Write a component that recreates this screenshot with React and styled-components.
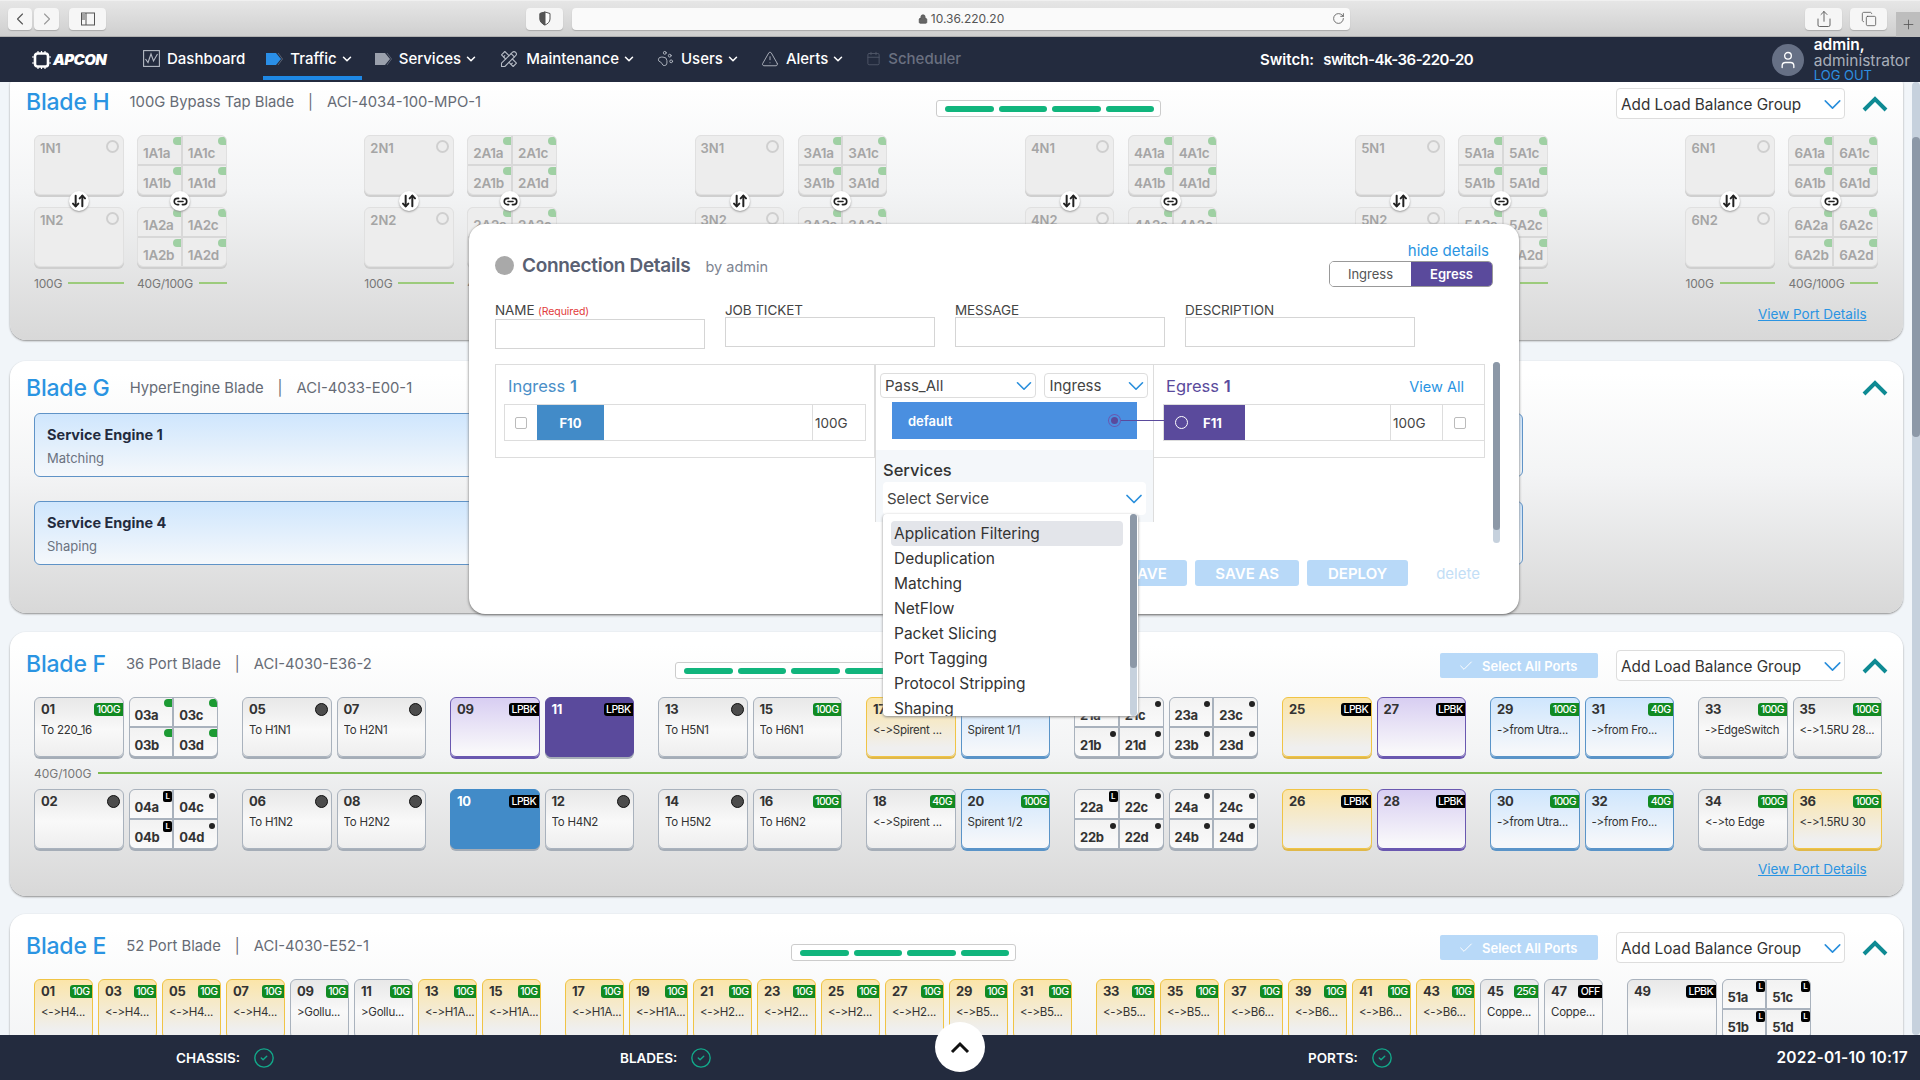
import React from 'react';
import styled, { createGlobalStyle, css } from 'styled-components';
import {
  ChevronLeft, ChevronRight, ChevronDown, Lock, RotateCw, Share, Copy, Plus, PawPrint,
  TriangleAlert, Calendar, CircleCheck, ArrowDownUp, Link2, Check, User,
} from 'lucide-react';
import { TbTools } from 'react-icons/tb';

const GlobalStyle = createGlobalStyle`
  html, body { margin: 0; height: 100%; overflow: hidden; background: #f1f5f9; }
  body { font-family: Inter, "Liberation Sans", sans-serif; color: #333; }
  * { box-sizing: border-box; }
`;

const Page = styled.div`
  position: relative;
  display: flex;
  flex-direction: column;
  height: 1080px;
  overflow: hidden;
`;

/* ---- browser bar ---- */
const Chrome = styled.div`
  display: flex;
  align-items: center;
  height: 37px;
  padding-left: 8px;
  background: linear-gradient(#e6e6e6, #cfcfcf);
  border-top: 1px solid #f0f0f0;
  border-bottom: 1px solid #b0b0b0;
`;
const ChromeBtn = styled.div`
  display: flex;
  align-items: center;
  justify-content: center;
  width: ${p => p.$w || 37}px;
  height: 22px;
  margin-left: ${p => p.$ml || 0}px;
  background: #f6f6f6;
  border-radius: 4px;
  box-shadow: 0 1px 1px #aaa;
  color: #555;
`;
const Address = styled.div`
  position: relative;
  display: flex;
  align-items: center;
  justify-content: center;
  gap: 3px;
  width: 778px;
  height: 22px;
  margin-left: 9px;
  background: #fafafa;
  border-radius: 4px;
  box-shadow: 0 1px 1px #aaa;
  font-size: 12px;
  color: #555;
  svg.reload { position: absolute; right: 5px; }
`;
const NewTab = styled.div`
  display: flex;
  align-items: center;
  justify-content: center;
  width: 24px;
  height: 25px;
  margin: 12px 0 0 9px;
  background: #bdbdbd;
  color: #555;
`;
const Spacer = styled.div`flex: 1;`;

/* ---- top nav ---- */
const Nav = styled.nav`
  position: relative;
  z-index: 6;
  display: grid;
  grid-template-columns: 111px 1117px 1fr auto;
  align-items: center;
  height: 45px;
  padding: 0 10px 0 32px;
  background: #232b3e;
  color: #fff;
`;
const Logo = styled.div`
  display: flex;
  align-items: center;
  gap: 2px;
  font-size: 15px;
  font-weight: 900;
  font-style: italic;
  letter-spacing: -0.6px;
`;
const NavItems = styled.div`
  display: flex;
  height: 45px;
  margin-left: -11px;
`;
const NavItem = styled.div`
  position: relative;
  display: flex;
  align-items: center;
  gap: 7px;
  padding: 0 10px 2px 11px;
  font-size: 15px;
  font-weight: 500;
  color: ${p => (p.$off ? '#6a7080' : '#fff')};
  svg { color: ${p => (p.$off ? '#4f5667' : '#b5bac4')}; flex: none; }
  ${p => p.$active && css`
    &::after {
      content: '';
      position: absolute;
      left: 8px;
      right: 2px;
      bottom: 2px;
      height: 4px;
      background: #1e88e5;
    }
  `}
`;
const NavChevron = styled(ChevronDown)`
  margin-left: -4px;
  && { color: #fff; }
`;
const SwitchName = styled.div`
  font-size: 15px;
  font-weight: 600;
  white-space: nowrap;
  span { margin-left: 9px; letter-spacing: -0.5px; }
`;
const UserBox = styled.div`
  display: flex;
  align-items: center;
  gap: 10px;
`;
const Avatar = styled.div`
  display: flex;
  align-items: center;
  justify-content: center;
  width: 32px;
  height: 32px;
  border-radius: 50%;
  background: #667085;
`;
const UserText = styled.div`
  display: flex;
  flex-direction: column;
  font-size: 15.5px;
  line-height: 16px;
  b { font-weight: 600; }
  span { color: #a9afba; }
  a { color: #2d8fe0; font-size: 13px; line-height: 13px; }
`;

/* ---- blades ---- */
const Body = styled.div`
  flex: 1;
  min-height: 0;
  display: flex;
  overflow: hidden;
`;
const Scroller = styled.div`
  flex: 1;
  min-width: 0;
  margin-top: -12px;
`;
const Track = styled.div`
  width: 8px;
  padding-top: 55px;
  background: #c6d1dd;
  border-radius: 4px;
`;
const Thumb = styled.div`
  height: 300px;
  border-radius: 4px;
  background: #8c98a7;
`;
const Card = styled.section`
  height: ${p => p.$h}px;
  margin: 0 9px ${p => p.$mb}px 10px;
  padding: ${p => p.$pt || 18}px 0 0 24px;
  border-radius: 16px;
  background: linear-gradient(#fff 5%, #f3f4f5 45%, #d8d8d8);
  box-shadow: 0 1px 2px #8f8f8f;
`;
const Header = styled.header`
  display: flex;
  align-items: flex-start;
  height: 31px;
  margin-left: -8px;
  padding-right: 15px;
`;
const TitleBlock = styled.div`
  display: flex;
  width: ${p => p.$w}px;
  flex: none;
  align-items: center;
  height: 28px;
  white-space: nowrap;
`;
const BladeName = styled.h2`
  margin: 0 20px 0 0;
  font-size: 23px;
  font-weight: 500;
  letter-spacing: -0.2px;
  color: #2a94e2;
`;
const BladeInfo = styled.span`
  font-size: 14.8px;
  color: #666b75;
  i { font-style: normal; margin: 0 14px; }
`;
const Meter = styled.div`
  display: flex;
  gap: 5px;
  align-items: center;
  width: 225px;
  height: 17px;
  margin-top: 12px;
  padding: 0 6px 0 8px;
  background: #fff;
  border: 1px solid #ccc;
  border-radius: 3px;
  span { width: 49px; height: 6px; border-radius: 3px; background: #11b57d; }
`;
const HeadRight = styled.div`
  display: flex;
  align-items: flex-start;
  margin-left: auto;
`;
const SelectAll = styled.div`
  display: flex;
  align-items: center;
  gap: 8px;
  width: 158px;
  height: 25px;
  margin: 3px 18px 0 0;
  padding-left: 18px;
  background: #b8d9f8;
  border-radius: 2px;
  color: #fff;
  font-size: 13px;
  font-weight: 600;
  white-space: nowrap;
`;
const LoadSelect = styled.div`
  display: flex;
  align-items: center;
  justify-content: space-between;
  width: 229px;
  height: 31px;
  padding: 1px 0 0 4px;
  background: #fff;
  border: 1px solid #ddd;
  border-radius: 4px;
  font-size: 15.3px;
  color: #333;
  white-space: nowrap;
  overflow: hidden;
  svg { color: #2a8fdc; flex: none; margin-right: -3px; }
`;
const Caret = styled.svg`
  width: 26px;
  height: 16px;
  margin: ${p => (p.$tight ? 6 : 8)}px 0 0 17px;
  flex: none;
  fill: none;
  stroke: #0e8a93;
  stroke-width: 4;
`;

/* ---- ports ---- */
const tones = {
  plain: css`background: linear-gradient(#e8e8e8, #f9f9f9 55%, #eeeeee); border-color: #a9b2bd; box-shadow: 0 2px 0 #a5adb7;`,
  yellow: css`background: linear-gradient(#fbe5a9, #efefef 85%); border-color: #f0c445; box-shadow: 0 2px 0 #e0b84a;`,
  blue: css`background: linear-gradient(#cfe6fd, #f5f7fa 90%); border-color: #5a94c8; box-shadow: 0 2px 0 #5a94c8;`,
  purple: css`background: linear-gradient(#d8cef2, #f8f7fa 90%); border-color: #6a58b0; box-shadow: 0 2px 0 #6a58b0;`,
  violet: css`background: #5a4a9c; border-color: #5a4a9c; color: #fff; box-shadow: 0 2px 0 #a5adb7;`,
  azure: css`background: #428bc8; border-color: #428bc8; color: #fff; box-shadow: 0 2px 0 #a5adb7;`,
  faded: css`background: #ededed; border-color: #e0e0e0; color: #a5a5a5; box-shadow: 0 2px 0 #cfcfcf;`,
};
const PortBox = styled.div`
  position: relative;
  width: ${p => p.$w || 89.5}px;
  height: 60px;
  padding: 4px 0 0 ${p => (p.$tone === 'faded' ? 5 : 6)}px;
  flex: none;
  border: 1px solid;
  border-radius: 6px;
  overflow: hidden;
  color: #333;
  ${p => tones[p.$tone || 'plain']}
`;
const PortHead = styled.div`
  display: flex;
  align-items: center;
  justify-content: space-between;
  height: 14px;
  font-size: 13px;
  font-weight: 700;
  letter-spacing: -0.3px;
`;
const Tag = styled.span`
  display: flex;
  align-items: center;
  height: 13px;
  padding: 0 2.5px;
  border-radius: 3px 0 0 3px;
  background: ${p => (p.$black ? '#000' : '#118a22')};
  color: #fff;
  font-size: 10.5px;
  font-weight: 500;
  letter-spacing: -0.6px;
`;
const Dot = styled.span`
  width: 13px;
  height: 13px;
  margin-right: 3px;
  border-radius: 50%;
  background: #4c4c4c;
  border: 1px solid #111;
`;
const Ring = styled.span`
  width: 13px;
  height: 13px;
  margin-right: 4px;
  border-radius: 50%;
  border: 2px solid #cfcfcf;
`;
const PortLabel = styled.div`
  margin-top: 6px;
  font-size: 11.5px;
  line-height: 16px;
  letter-spacing: -0.25px;
  white-space: nowrap;
  overflow: hidden;
`;
const SplitBox = styled.div`
  display: grid;
  grid-template-columns: 1fr 1fr;
  grid-template-rows: 1fr 1fr;
  gap: 2px;
  width: 89.5px;
  height: 60px;
  flex: none;
  overflow: hidden;
  border-radius: 6px;
  background: ${p => (p.$faded ? '#d8d8d8' : '#a9b2bd')};
  border: 1px solid ${p => (p.$faded ? '#e0e0e0' : '#a9b2bd')};
  box-shadow: 0 2px 0 ${p => (p.$faded ? '#cfcfcf' : '#a5adb7')};
`;
const SplitCell = styled.div`
  position: relative;
  display: flex;
  align-items: flex-end;
  padding: 0 0 3px 5px;
  background: ${p => (p.$faded ? '#ededed' : 'linear-gradient(#f2f2f2, #fafafa)')};
  color: ${p => (p.$faded ? '#a5a5a5' : '#333')};
  font-size: ${p => (p.$faded ? 13.5 : 13)}px;
  font-weight: ${p => (p.$faded ? 600 : 700)};
  letter-spacing: -0.3px;
  line-height: 16px;
`;
const markerKinds = {
  green: css`top: 1px; right: 0; width: 8px; height: 8px; border-radius: 4px 0 0 4px; background: #1c9a33;`,
  pale: css`top: 1px; right: 0; width: 8px; height: 8px; border-radius: 4px 0 0 4px; background: #9fd0a3;`,
  dot: css`top: 3px; right: 2px; width: 6px; height: 6px; border-radius: 50%; background: #222;`,
  lpbk: css`
    top: 1px; right: 0; width: 9px; height: 11px; border-radius: 2px; background: #000; color: #fff;
    font-size: 8px; line-height: 11px; text-align: center; font-weight: 600; letter-spacing: 0;
  `,
};
const Marker = styled.span`
  position: absolute;
  ${p => markerKinds[p.$kind]}
`;

function Port({ no, label, tag, tone, dot, w }) {
  const black = tag === 'LPBK' || tag === 'OFF';
  return (
    <PortBox $tone={tone} $w={w}>
      <PortHead>
        {no}
        {tag && <Tag $black={black}>{tag}</Tag>}
        {dot && <Dot />}
      </PortHead>
      {label && <PortLabel>{label}</PortLabel>}
    </PortBox>
  );
}

function Split({ no, kinds }) {
  const names = ['a', 'c', 'b', 'd'];
  return (
    <SplitBox>
      {names.map((n, i) => (
        <SplitCell key={n}>
          {no + n}
          <Marker $kind={kinds[i]}>{kinds[i] === 'lpbk' ? 'L' : ''}</Marker>
        </SplitCell>
      ))}
    </SplitBox>
  );
}

const PortArea = styled.div`
  margin-top: 16px;
`;
const PairGrid = styled.div`
  display: grid;
  grid-template-columns: repeat(9, 184px);
  column-gap: 24px;
`;
const Pair = styled.div`
  display: flex;
  gap: 5px;
`;
const SpeedLine = styled.div`
  display: flex;
  align-items: center;
  gap: 6px;
  width: 1848px;
  height: 32px;
  font-size: 12px;
  color: #777;
  &::after { content: ''; flex: 1; height: 2px; background: #7cbb4f; }
`;
const ViewLink = styled.a`
  display: block;
  width: 108px;
  margin: ${p => p.$mt}px 37px 0 auto;
  font-size: 13.5px;
  line-height: 18px;
  color: #2a94e2;
  text-decoration: underline;
  white-space: nowrap;
`;

/* blade H */
const BypassRow = styled.div`
  display: flex;
  justify-content: space-between;
  width: 1844px;
  margin-top: 16px;
`;
const Bypass = styled.div`
  position: relative;
  display: grid;
  grid-template-columns: 89.5px 89.5px;
  column-gap: 13.5px;
  row-gap: 12px;
`;
const FadedName = styled.div`
  display: flex;
  justify-content: space-between;
  font-size: 13px;
  font-weight: 600;
`;
const FadedCell = styled(SplitCell).attrs({ $faded: true })``;
const RoundLink = styled.div`
  position: absolute;
  top: 56px;
  left: ${p => p.$left}px;
  display: flex;
  align-items: center;
  justify-content: center;
  width: 20px;
  height: 20px;
  border-radius: 50%;
  background: #fff;
  box-shadow: 0 1px 2px #999;
  color: #222;
`;
const SpeedCell = styled.div`
  display: flex;
  align-items: center;
  gap: 6px;
  height: 16px;
  margin-top: -4px;
  font-size: 12px;
  letter-spacing: -0.2px;
  color: #777;
  &::after { content: ''; flex: 1; height: 2px; background: #9ccb7c; }
`;

/* blade G */
const EngineGrid = styled.div`
  display: grid;
  grid-template-columns: 736px 736px;
  column-gap: 17px;
  row-gap: 24px;
  margin-top: 8px;
`;
const Engine = styled.div`
  height: 64px;
  padding: 12px 12px 0;
  background: linear-gradient(#cfe6fd, #f5f8fb);
  border: 1px solid #5f93c7;
  border-radius: 6px;
  h4 { margin: 0; font-size: 14.5px; line-height: 18px; font-weight: 700; color: #232b3e; }
  p { margin: 6px 0 0; font-size: 13px; line-height: 16px; color: #6b7280; }
`;

/* blade E */
const WideRow = styled.div`
  display: flex;
  gap: 24px;
  margin-top: 16px;
`;

/* ---- modal ---- */
const Modal = styled.div`
  position: absolute;
  z-index: 5;
  top: 224px;
  left: 469px;
  width: 1050px;
  height: 390px;
  padding-left: 26px;
  background: #fff;
  border-radius: 16px;
  box-shadow: 0 1px 3px #666;
`;
const ModalHead = styled.div`
  display: flex;
  justify-content: space-between;
  align-items: flex-start;
  padding-right: 26px;
`;
const ModalTitle = styled.div`
  display: flex;
  align-items: center;
  height: 26px;
  margin-top: 28px;
  h3 { margin: 0 15px 0 8px; font-size: 19px; font-weight: 600; letter-spacing: -0.3px; color: #596072; }
  span { font-size: 14.5px; color: #7d8491; padding-top: 3px; }
`;
const StatusDot = styled.span`
  width: 19px;
  height: 19px;
  border-radius: 50%;
  background: #a9a9a9;
`;
const HeadSide = styled.div`
  display: flex;
  flex-direction: column;
  align-items: flex-end;
  padding-top: 17px;
  a { margin-right: 4px; font-size: 15px; line-height: 20px; color: #2a94e2; }
`;
const Toggle = styled.div`
  display: flex;
  width: 164px;
  height: 26px;
  border: 1px solid #999;
  border-radius: 5px;
  overflow: hidden;
  font-size: 13px;
`;
const ToggleOption = styled.div`
  flex: 1;
  display: flex;
  align-items: center;
  justify-content: center;
  background: ${p => (p.$on ? '#5a4a9c' : '#fff')};
  color: ${p => (p.$on ? '#fff' : '#555')};
  font-weight: ${p => (p.$on ? 600 : 400)};
`;
const Fields = styled.div`
  display: grid;
  grid-template-columns: 210px 210px 210px 230px;
  column-gap: 20px;
  margin-top: 16px;
`;
const Field = styled.label`
  display: block;
  font-size: 13.5px;
  line-height: 14px;
  color: #444;
  letter-spacing: -0.1px;
  em { font-style: normal; font-size: 10.5px; color: #e23b3b; }
  div { height: 30px; border: 1px solid #d5d5d5; }
`;
const Connection = styled.div`
  display: flex;
  align-items: flex-start;
  margin-top: 15px;
`;
const SidePanel = styled.div`
  flex: none;
  width: ${p => p.$w}px;
  height: 94px;
  padding-top: 10px;
  border: 1px solid #ddd;
  ${p => p.$right && css`border-left: 0;`}
`;
const PanelTitle = styled.div`
  display: flex;
  justify-content: space-between;
  align-items: center;
  height: 22px;
  padding: 0 20px 0 ${p => p.$pl}px;
  font-size: 16.5px;
  color: ${p => p.$color};
  b { font-weight: 600; }
  a { font-size: 14.5px; color: #2a94e2; }
`;
const PortStrip = styled.div`
  display: flex;
  align-items: stretch;
  height: 37px;
  margin: 7px ${p => p.$mr}px 0 ${p => p.$ml}px;
  border: 1px solid #ddd;
  ${p => p.$open && css`border-right: 0;`}
`;
const Box = styled.span`
  width: 12px;
  height: 12px;
  border: 1px solid #bbb;
  border-radius: 2px;
`;
const BoxCell = styled.div`
  display: flex;
  align-items: center;
  justify-content: center;
  width: ${p => p.$w}px;
  padding-right: ${p => p.$pr || 0}px;
  ${p => p.$line && css`border-left: 1px solid #ddd;`}
`;
const PortFace = styled.div`
  display: flex;
  align-items: center;
  justify-content: ${p => (p.$ring ? 'flex-start' : 'center')};
  gap: 15px;
  width: ${p => p.$w}px;
  padding-left: ${p => (p.$ring ? 11 : 0)}px;
  background: ${p => p.$bg};
  color: #fff;
  font-size: 13px;
  font-weight: 700;
  i { width: 13px; height: 13px; border: 1.5px solid #fff; border-radius: 50%; }
`;
const SpeedCellBox = styled.div`
  display: flex;
  align-items: center;
  width: ${p => p.$w}px;
  margin-left: auto;
  padding-left: 2px;
  border-left: 1px solid #ddd;
  font-size: 13.5px;
  color: #444;
`;
const Mid = styled.div`
  position: relative;
  flex: none;
  width: 279px;
  height: 158px;
  border: 1px solid #ddd;
  border-bottom: 0;
`;
const MidSelects = styled.div`
  display: flex;
  gap: 8px;
  padding: 8px 5px 0 4px;
`;
const MiniSelect = styled.div`
  display: flex;
  align-items: center;
  justify-content: space-between;
  width: ${p => p.$w}px;
  height: 25px;
  padding: 0 1px 0 4px;
  border: 1px solid #ddd;
  border-radius: 4px;
  font-size: 15px;
  color: #444;
  overflow: hidden;
  svg { color: #2a8fdc; flex: none; margin-right: -3px; }
`;
const FilterBar = styled.div`
  position: relative;
  display: flex;
  align-items: center;
  height: 37px;
  margin: 4px 0 0 16px;
  width: 245px;
  padding: 0 0 0 16px;
  background: #4a8fe0;
  color: #fff;
  font-size: 13px;
  font-weight: 600;
`;
const FilterPin = styled.span`
  position: absolute;
  top: 15px;
  left: 219px;
  width: 7px;
  height: 7px;
  border-radius: 50%;
  background: #5a4a9c;
  box-shadow: 0 0 0 2px #4a8fe0, 0 0 0 3px #6a58b0;
`;
const Wire = styled.span`
  position: absolute;
  z-index: 1;
  top: 18px;
  left: 229px;
  width: 43px;
  height: 1px;
  background: #5a4a9c;
`;
const ServiceBlock = styled.div`
  height: 72px;
  margin-top: 11px;
  padding: 9px 7px 0;
  background: #f4f7fa;
  h5 { margin: 0 0 1px; font-size: 16.5px; line-height: 22px; font-weight: 500; color: #333; }
`;
const ServiceSelect = styled.div`
  display: flex;
  align-items: center;
  justify-content: space-between;
  height: 33px;
  padding: 0 1px 0 4px;
  background: #fff;
  border-radius: 4px;
  font-size: 15px;
  color: #444;
  overflow: hidden;
  svg { color: #2a8fdc; flex: none; margin-right: -3px; }
`;
const Menu = styled.div`
  position: absolute;
  z-index: 2;
  top: 149px;
  left: 7px;
  width: 255px;
  height: 202px;
  padding: 7px 0 0 8px;
  background: #fff;
  border-radius: 4px;
  overflow: hidden;
  box-shadow: 0 1px 3px #888;
`;
const MenuItem = styled.div`
  width: 232px;
  height: 25px;
  padding-left: 3px;
  border-radius: 4px;
  background: ${p => (p.$on ? '#e3e5ea' : 'transparent')};
  font-size: 15.5px;
  line-height: 25px;
  color: #333;
`;
const Rail = styled.div`
  position: absolute;
  top: ${p => p.$top}px;
  right: ${p => p.$right}px;
  width: 7px;
  height: ${p => p.$h}px;
  border-radius: 4px;
  background: #c6d1dd;
  span { display: block; height: ${p => p.$thumb}px; border-radius: 4px; background: #8c98a7; }
`;
const Actions = styled.div`
  display: flex;
  align-items: center;
  justify-content: flex-end;
  gap: 8px;
  margin-top: 38px;
  padding-right: 39px;
  a { margin-left: 20px; font-size: 15px; color: #c3def6; }
`;
const ActionBtn = styled.div`
  display: flex;
  align-items: center;
  justify-content: center;
  width: ${p => p.$w}px;
  height: 26px;
  background: #b8d9f8;
  border-radius: 3px;
  color: #fff;
  font-size: 15px;
  font-weight: 600;
`;

/* ---- footer ---- */
const Footer = styled.footer`
  position: relative;
  z-index: 6;
  display: grid;
  grid-template-columns: 444px 688px 1fr auto;
  align-items: center;
  height: 45px;
  padding: 0 12px 0 176px;
  background: #232b3e;
  color: #fff;
  font-size: 14px;
  font-weight: 600;
`;
const Health = styled.div`
  display: flex;
  align-items: center;
  gap: 13px;
  font-size: 13.5px;
  svg { color: #12a98a; }
`;
const UpButton = styled.div`
  position: absolute;
  left: 935px;
  top: -13px;
  display: flex;
  align-items: center;
  justify-content: center;
  width: 50px;
  height: 50px;
  border-radius: 50%;
  background: #fff;
  color: #111;
`;
const Clock = styled.div`
  font-size: 15.5px;
  letter-spacing: 0.2px;
`;

const Up = ({ tight }) => (
  <Caret viewBox="0 0 26 16" $tight={tight}><path d="M2 14 13 3l11 11" /></Caret>
);

function BladeHead({ name, info, model, w, meter, selectAll, noSelect, tight }) {
  return (
    <Header>
      <TitleBlock $w={w}>
        <BladeName>{name}</BladeName>
        <BladeInfo>{info}<i>|</i>{model}</BladeInfo>
      </TitleBlock>
      {meter && <Meter><span /><span /><span /><span /></Meter>}
      <HeadRight>
        {selectAll && <SelectAll><Check size={16} strokeWidth={1.5} />Select All Ports</SelectAll>}
        {!noSelect && <LoadSelect>Add Load Balance Group<ChevronDown size={29} strokeWidth={1.3} /></LoadSelect>}
        <Up tight={tight} />
      </HeadRight>
    </Header>
  );
}

function BypassGroup({ n }) {
  const cell = s => ['a', 'c', 'b', 'd'].map(c => (
    <FadedCell key={c}>{`${n}A${s}${c}`}<Marker $kind="pale" /></FadedCell>
  ));
  const node = s => (
    <PortBox $tone="faded">
      <FadedName>{`${n}N${s}`}<Ring /></FadedName>
    </PortBox>
  );
  return (
    <Bypass>
      {node(1)}
      <SplitBox $faded>{cell(1)}</SplitBox>
      {node(2)}
      <SplitBox $faded>{cell(2)}</SplitBox>
      <SpeedCell>100G</SpeedCell>
      <SpeedCell>40G/100G</SpeedCell>
      <RoundLink $left={35}><ArrowDownUp size={16} strokeWidth={3} /></RoundLink>
      <RoundLink $left={136}><Link2 size={15} strokeWidth={2.6} /></RoundLink>
    </Bypass>
  );
}

const G4 = ['green', 'green', 'green', 'green'];
const D4 = ['dot', 'dot', 'dot', 'dot'];

const fTop = [
  [<Port key="a" no="01" tag="100G" label="To 220_16" />, <Split key="b" no="03" kinds={G4} />],
  [<Port key="a" no="05" dot label="To H1N1" />, <Port key="b" no="07" dot label="To H2N1" />],
  [<Port key="a" no="09" tag="LPBK" tone="purple" />, <Port key="b" no="11" tag="LPBK" tone="violet" />],
  [<Port key="a" no="13" dot label="To H5N1" />, <Port key="b" no="15" tag="100G" label="To H6N1" />],
  [<Port key="a" no="17" tag="100G" tone="yellow" label="<->Spirent ..." />, <Port key="b" no="19" tag="100G" tone="blue" label="Spirent 1/1" />],
  [<Split key="a" no="21" kinds={D4} />, <Split key="b" no="23" kinds={D4} />],
  [<Port key="a" no="25" tag="LPBK" tone="yellow" />, <Port key="b" no="27" tag="LPBK" tone="purple" />],
  [<Port key="a" no="29" tag="100G" tone="blue" label="->from Utra..." />, <Port key="b" no="31" tag="40G" tone="blue" label="->from Fro..." />],
  [<Port key="a" no="33" tag="100G" label="->EdgeSwitch" />, <Port key="b" no="35" tag="100G" label="<->1.5RU 28..." />],
];
const fBottom = [
  [<Port key="a" no="02" dot />, <Split key="b" no="04" kinds={['lpbk', 'dot', 'lpbk', 'dot']} />],
  [<Port key="a" no="06" dot label="To H1N2" />, <Port key="b" no="08" dot label="To H2N2" />],
  [<Port key="a" no="10" tag="LPBK" tone="azure" />, <Port key="b" no="12" dot label="To H4N2" />],
  [<Port key="a" no="14" dot label="To H5N2" />, <Port key="b" no="16" tag="100G" label="To H6N2" />],
  [<Port key="a" no="18" tag="40G" label="<->Spirent ..." />, <Port key="b" no="20" tag="100G" tone="blue" label="Spirent 1/2" />],
  [<Split key="a" no="22" kinds={['lpbk', 'dot', 'dot', 'dot']} />, <Split key="b" no="24" kinds={D4} />],
  [<Port key="a" no="26" tag="LPBK" tone="yellow" />, <Port key="b" no="28" tag="LPBK" tone="purple" />],
  [<Port key="a" no="30" tag="100G" tone="blue" label="->from Utra..." />, <Port key="b" no="32" tag="40G" tone="blue" label="->from Fro..." />],
  [<Port key="a" no="34" tag="100G" label="<->to Edge" />, <Port key="b" no="36" tag="100G" tone="yellow" label="<->1.5RU 30" />],
];

const narrow = [
  [['01', '<->H4...'], ['03', '<->H4...'], ['05', '<->H4...'], ['07', '<->H4...'], ['09', '>Gollu...', 'plain'], ['11', '>Gollu...', 'plain'], ['13', '<->H1A...'], ['15', '<->H1A...']],
  [['17', '<->H1A...'], ['19', '<->H1A...'], ['21', '<->H2...'], ['23', '<->H2...'], ['25', '<->H2...'], ['27', '<->H2...'], ['29', '<->B5...'], ['31', '<->B5...']],
  [['33', '<->B5...'], ['35', '<->B5...'], ['37', '<->B6...'], ['39', '<->B6...'], ['41', '<->B6...'], ['43', '<->B6...'], ['45', 'Coppe...', 'plain', '25G'], ['47', 'Coppe...', 'plain', 'OFF']],
];

const services = ['Application Filtering', 'Deduplication', 'Matching', 'NetFlow', 'Packet Slicing', 'Port Tagging', 'Protocol Stripping', 'Shaping'];

const PairRows = ({ rows }) => (
  <PairGrid>
    {rows.map((pair, i) => <Pair key={i}>{pair}</Pair>)}
  </PairGrid>
);

export default function App() {
  return (
    <Page>
      <GlobalStyle />
      <Chrome>
        <ChromeBtn $w={24}><ChevronLeft size={20} strokeWidth={1.3} /></ChromeBtn>
        <ChromeBtn $w={25} $ml={2}><ChevronRight size={20} strokeWidth={1.3} color="#999" /></ChromeBtn>
        <ChromeBtn $ml={10}>
          <svg width="16" height="14" viewBox="0 0 16 14" fill="none" stroke="#555">
            <rect x="1.5" y="1" width="13" height="12" /><path d="M6 1v12" /><path d="M2 3h3M2 5h3M2 7h3" />
          </svg>
        </ChromeBtn>
        <ChromeBtn $ml={420}>
          <svg width="12" height="15" viewBox="0 0 12 15" stroke="#555">
            <path d="M6 1 1 2.5V8c0 3 2.5 5 5 6 2.5-1 5-3 5-6V2.5z" fill="#fff" />
            <path d="M6 1v13c-2.5-1-5-3-5-6V2.5z" fill="#555" />
          </svg>
        </ChromeBtn>
        <Address>
          <Lock size={10} fill="#666" />10.36.220.20
          <RotateCw className="reload" size={13} strokeWidth={1.5} />
        </Address>
        <Spacer />
        <ChromeBtn><Share size={18} strokeWidth={1.2} /></ChromeBtn>
        <ChromeBtn $ml={8}><Copy size={16} strokeWidth={1.2} /></ChromeBtn>
        <NewTab><Plus size={15} strokeWidth={1.3} /></NewTab>
      </Chrome>

      <Nav>
        <Logo>
          <svg width="19" height="18" viewBox="0 0 19 18" fill="none" stroke="#fff">
            <rect x="3" y="2.5" width="13" height="13" rx="2.5" strokeWidth="2.6" />
            <path d="M6 0v2M9.5 0v2M13 0v2M6 16v2M9.5 16v2M13 16v2M0 6h2M0 12h2M17 6h2M17 12h2" strokeWidth="1.2" />
          </svg>
          APCON
        </Logo>
        <NavItems>
          <NavItem>
            <svg width="17" height="17" viewBox="0 0 17 17" fill="none" stroke="currentColor" strokeWidth="1.1">
              <rect x="0.6" y="0.6" width="15.8" height="15.8" /><path d="m2.5 9 2.5 3.5L8 4l2.500 7 4-7" />
            </svg>
            Dashboard
          </NavItem>
          <NavItem $active>
            <svg width="17" height="14" viewBox="0 0 17 14"><path d="M0 1h10l5 6-5 6H0z" fill="#2a8fe8" /><path d="M12 1l4.5 6-4.5 6" stroke="#5a6274" fill="none" /></svg>
            Traffic<NavChevron size={14} strokeWidth={2.6} />
          </NavItem>
          <NavItem>
            <svg width="17" height="14" viewBox="0 0 17 14"><path d="M0 1h10l5 6-5 6H0z" fill="#9aa0ac" /><path d="M12 1l4.5 6-4.5 6" stroke="#5a6274" fill="none" /></svg>
            Services<NavChevron size={14} strokeWidth={2.6} />
          </NavItem>
          <NavItem>
            <TbTools size={20} strokeWidth={1.3} />
            Maintenance<NavChevron size={14} strokeWidth={2.6} />
          </NavItem>
          <NavItem>
            <PawPrint size={17} strokeWidth={1.3} />
            Users<NavChevron size={14} strokeWidth={2.6} />
          </NavItem>
          <NavItem>
            <TriangleAlert size={18} strokeWidth={1.2} />
            Alerts<NavChevron size={14} strokeWidth={2.6} />
          </NavItem>
          <NavItem $off>
            <Calendar size={15} strokeWidth={1.5} />
            Scheduler
          </NavItem>
        </NavItems>
        <SwitchName>Switch:<span>switch-4k-36-220-20</span></SwitchName>
        <UserBox>
          <Avatar><User size={20} strokeWidth={1.6} color="#fff" /></Avatar>
          <UserText>
            <b>admin,</b>
            <span>administrator</span>
            <a>LOG OUT</a>
          </UserText>
        </UserBox>
      </Nav>

      <Body>
        <Scroller>
          <Card $h={270} $mb={21}>
            <BladeHead name="Blade H" info="100G Bypass Tap Blade" model="ACI-4034-100-MPO-1" w={910} meter />
            <BypassRow>
              {[1, 2, 3, 4, 5, 6].map(n => <BypassGroup key={n} n={n} />)}
            </BypassRow>
            <ViewLink $mt={14}>View Port Details</ViewLink>
          </Card>

          <Card $h={252} $mb={19} $pt={13}>
            <BladeHead name="Blade G" info="HyperEngine Blade" model="ACI-4033-E00-1" w={800} noSelect tight />
            <EngineGrid>
              <Engine><h4>Service Engine 1</h4><p>Matching</p></Engine>
              <Engine />
              <Engine><h4>Service Engine 4</h4><p>Shaping</p></Engine>
              <Engine />
            </EngineGrid>
          </Card>

          <Card $h={264} $mb={18}>
            <BladeHead name="Blade F" info="36 Port Blade" model="ACI-4030-E36-2" w={649} meter selectAll />
            <PortArea>
              <PairRows rows={fTop} />
              <SpeedLine>40G/100G</SpeedLine>
              <PairRows rows={fBottom} />
            </PortArea>
            <ViewLink $mt={11}>View Port Details</ViewLink>
          </Card>

          <Card $h={300} $mb={0}>
            <BladeHead name="Blade E" info="52 Port Blade" model="ACI-4030-E52-1" w={765} meter selectAll />
            <WideRow>
              {narrow.map((group, i) => (
                <Pair key={i}>
                  {group.map(([no, label, tone, tag]) => (
                    <Port key={no} no={no} label={label} w={59} tone={tone || 'yellow'} tag={tag || '10G'} />
                  ))}
                </Pair>
              ))}
              <Pair>
                <Port no="49" tag="LPBK" />
                <Split no="51" kinds={['lpbk', 'lpbk', 'lpbk', 'lpbk']} />
              </Pair>
            </WideRow>
          </Card>
        </Scroller>
        <Track><Thumb /></Track>
      </Body>

      <Modal>
        <ModalHead>
          <ModalTitle>
            <StatusDot />
            <h3>Connection Details</h3>
            <span>by admin</span>
          </ModalTitle>
          <HeadSide>
            <a>hide details</a>
            <Toggle>
              <ToggleOption>Ingress</ToggleOption>
              <ToggleOption $on>Egress</ToggleOption>
            </Toggle>
          </HeadSide>
        </ModalHead>
        <Fields>
          <Field>NAME <em>(Required)</em><div /></Field>
          <Field>JOB TICKET<div /></Field>
          <Field>MESSAGE<div /></Field>
          <Field>DESCRIPTION<div /></Field>
        </Fields>
        <Connection>
          <SidePanel $w={380}>
            <PanelTitle $pl={12} $color="#4a8fc8">
              <span>Ingress <b>1</b></span>
            </PanelTitle>
            <PortStrip $ml={8} $mr={8}>
              <BoxCell $w={32}><Box /></BoxCell>
              <PortFace $w={67} $bg="#428bc8">F10</PortFace>
              <SpeedCellBox $w={53}>100G</SpeedCellBox>
            </PortStrip>
          </SidePanel>
          <Mid>
            <MidSelects>
              <MiniSelect $w={157}>Pass_All<ChevronDown size={26} strokeWidth={1.5} /></MiniSelect>
              <MiniSelect $w={104}>Ingress<ChevronDown size={26} strokeWidth={1.5} /></MiniSelect>
            </MidSelects>
            <FilterBar>
              default
              <FilterPin />
              <Wire />
            </FilterBar>
            <ServiceBlock>
              <h5>Services</h5>
              <ServiceSelect>Select Service<ChevronDown size={28} strokeWidth={1.5} /></ServiceSelect>
            </ServiceBlock>
            <Menu>
              {services.map((s, i) => <MenuItem key={s} $on={i === 0}>{s}</MenuItem>)}
              <Rail $top={0} $right={1} $h={202} $thumb={154}><span /></Rail>
            </Menu>
          </Mid>
          <SidePanel $w={331} $right>
            <PanelTitle $pl={12} $color="#5a4a9c">
              <span>Egress <b>1</b></span>
              <a>View All</a>
            </PanelTitle>
            <PortStrip $ml={9} $mr={0} $open>
              <PortFace $w={81} $bg="#5a4a9c" $ring><i />F11</PortFace>
              <SpeedCellBox $w={52}>100G</SpeedCellBox>
              <BoxCell $w={42} $pr={8} $line><Box /></BoxCell>
            </PortStrip>
          </SidePanel>
        </Connection>
        <Actions>
          <ActionBtn $w={80}>SAVE</ActionBtn>
          <ActionBtn $w={104}>SAVE AS</ActionBtn>
          <ActionBtn $w={101}>DEPLOY</ActionBtn>
          <a>delete</a>
        </Actions>
        <Rail $top={138} $right={19} $h={181} $thumb={168}><span /></Rail>
      </Modal>

      <Footer>
        <Health>CHASSIS:<CircleCheck size={22} strokeWidth={1.5} /></Health>
        <Health>BLADES:<CircleCheck size={22} strokeWidth={1.5} /></Health>
        <Health>PORTS:<CircleCheck size={22} strokeWidth={1.5} /></Health>
        <Clock>2022-01-10 10:17</Clock>
        <UpButton>
          <svg width="20" height="13" viewBox="0 0 20 13" fill="none" stroke="#111" strokeWidth="3"><path d="m2 11 8-8 8 8" /></svg>
        </UpButton>
      </Footer>
    </Page>
  );
}
